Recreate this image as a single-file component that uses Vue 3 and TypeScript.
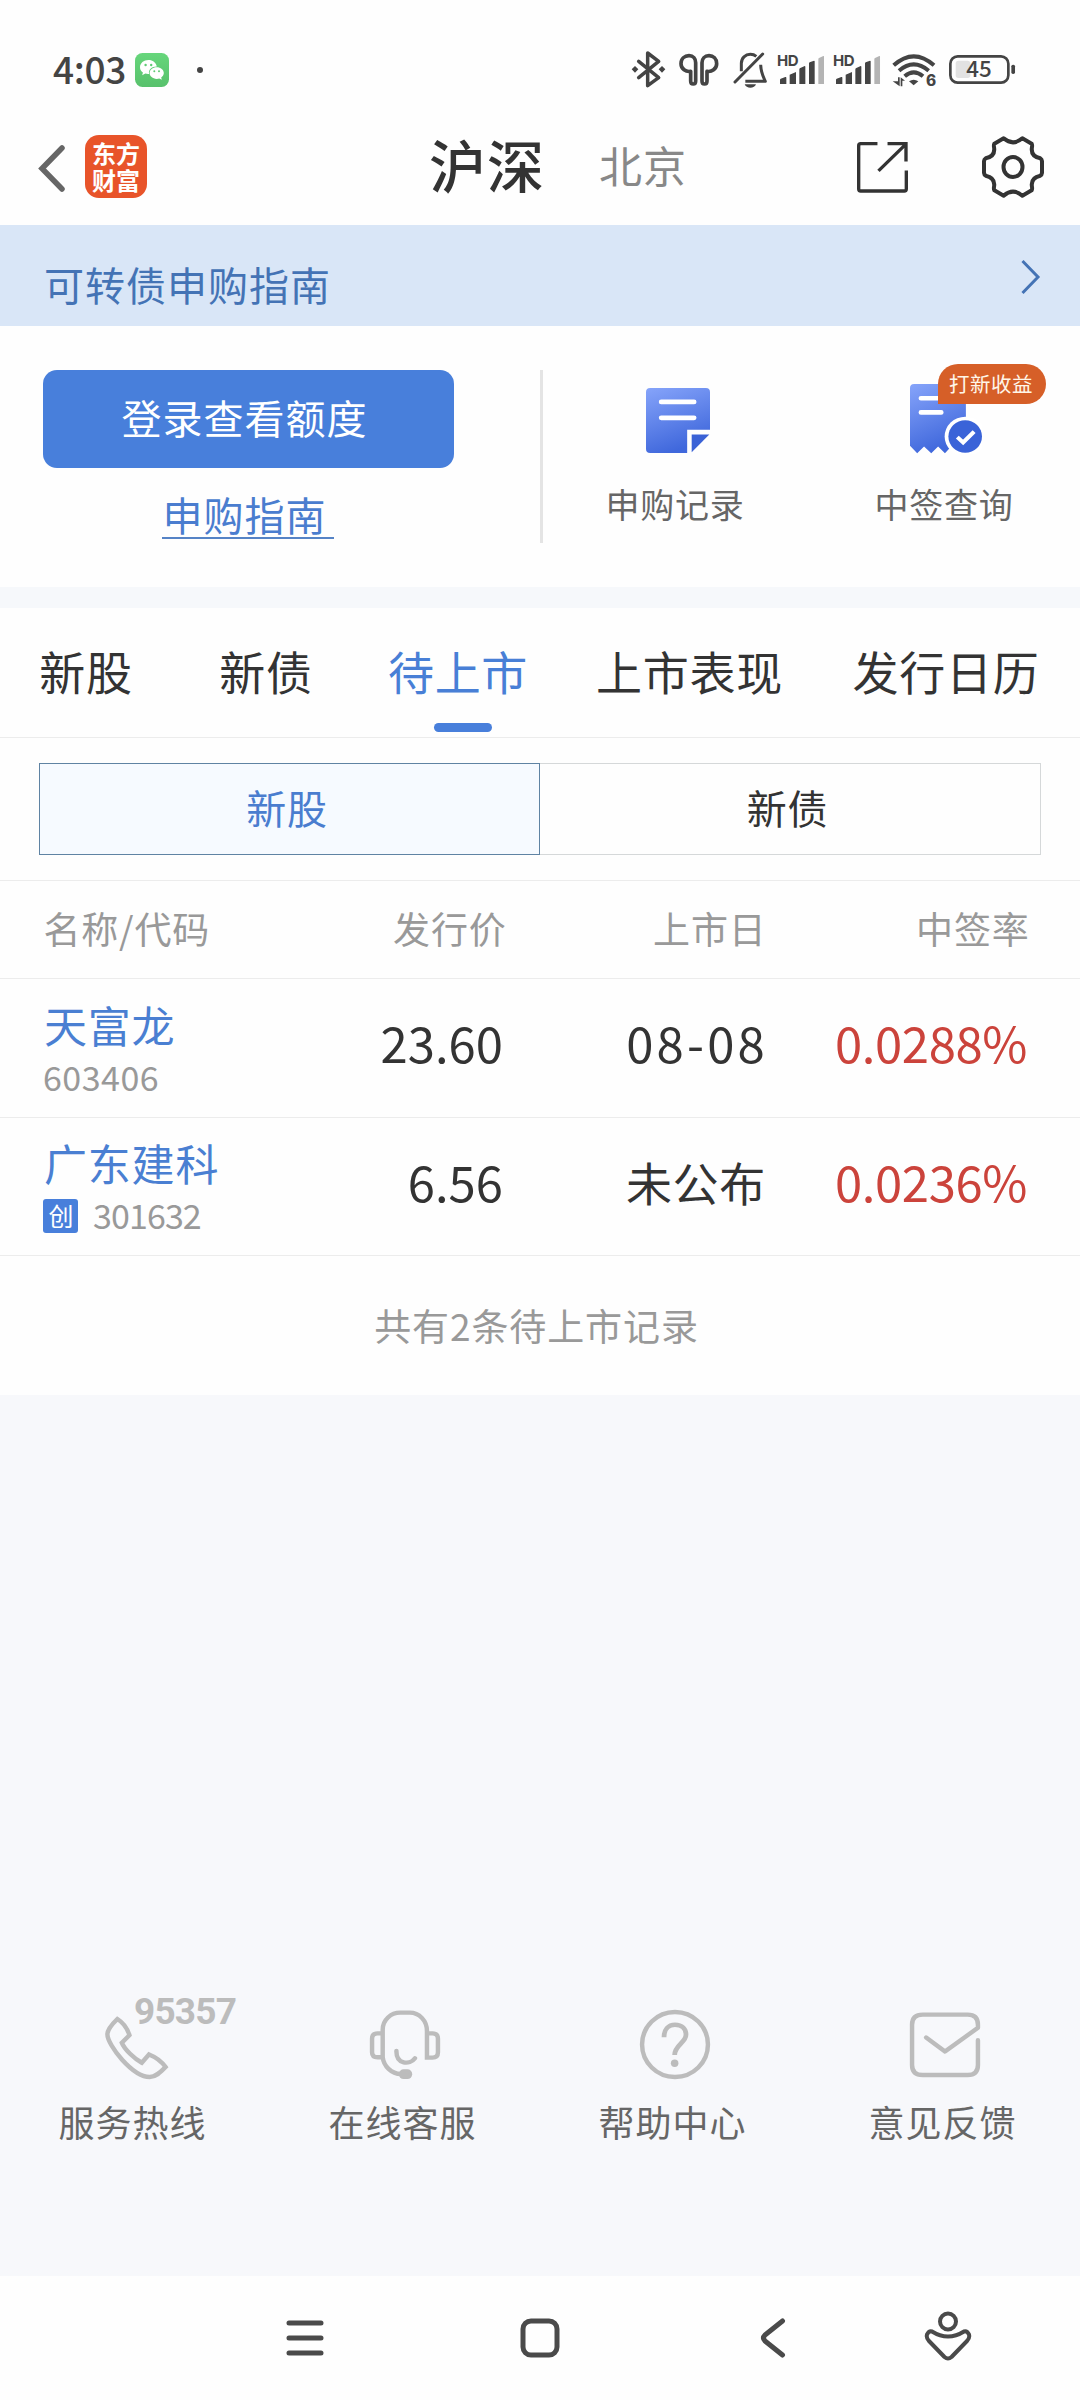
<script setup lang="ts">
interface Stock {
  name: string
  code: string
  board?: string
  price: string
  date: string
  rate: string
}

const tabs: string[] = ['新股', '新债', '待上市', '上市表现', '发行日历']
const activeTab = '待上市'
const columns: string[] = ['名称/代码', '发行价', '上市日', '中签率']
const stocks: Stock[] = [
  { name: '天富龙', code: '603406', price: '23.60', date: '08-08', rate: '0.0288%' },
  { name: '广东建科', code: '301632', board: '创', price: '6.56', date: '未公布', rate: '0.0236%' },
]
const isNumeric = (s: string): boolean => /^\d/.test(s)
</script>

<template>
  <div class="screen">
    <div class="status">
      <span class="time">4:03</span>
      <svg class="wechat" viewBox="0 0 34 34">
        <defs>
          <linearGradient id="wx" x1="0" y1="0" x2="0" y2="1">
            <stop offset="0" stop-color="#66d67b" />
            <stop offset="1" stop-color="#58c16c" />
          </linearGradient>
        </defs>
        <rect width="34" height="34" rx="7.5" fill="url(#wx)" />
        <path d="M13.5 7C8.7 7 5 10.200 5 14.200c0 2.300 1.100 4.100 2.900 5.400L7.200 22.200l3.100-1.600c1.200.4 2.400.5 3.800.4-1-4.300 2.600-7.700 7.700-7.600C21 9.600 17.700 7 13.500 7z" fill="#fff" />
        <path d="M21.700 14.300c-4 0-7.100 2.600-7.100 5.800s3.100 5.800 7.100 5.800c.9 0 1.800-.1 2.600-.4l2.500 1.300-.6-2.200c1.600-1.100 2.600-2.700 2.600-4.500 0-3.200-3.200-5.800-7.100-5.800z" fill="#fff" />
        <g fill="#5fcb74">
          <circle cx="10.600" cy="12" r="1.200" /><circle cx="16.200" cy="12" r="1.200" />
          <circle cx="19.300" cy="18.300" r="1" /><circle cx="24" cy="18.300" r="1" />
        </g>
      </svg>
      <i class="dot"></i>
      <svg class="st-icons" viewBox="90 60 1160 116">
        <g fill="none" stroke="#444" stroke-width="11" stroke-linecap="round" stroke-linejoin="round">
          <path d="M116 94L176 143L143 167V69L176 94L116 143" stroke-width="10.500" />
          <path d="M272 153V124C258 127 243 116 243 101C243 86 254 77 267 77C280 77 287 86 287 98V153C287 165 272 165 272 153z" />
          <path d="M321 124V153C321 165 306 165 306 153V98C306 86 314 77 327 77C340 77 350 86 350 101C350 116 335 127 321 124z" />
          <path d="M405 156L488 72" stroke-width="9" />
          <path d="M424 124V100C424 84 436 73 451 73C458 73 464 75 469 79M482 104C482 126 490 140 496 154H436" stroke-width="9" stroke-linecap="butt" />
        </g>
        <g fill="#444">
          <path d="M95 118l10-10 10 10-10 10zM176 118l10-10 10 10-10 10z" />
          <path d="M434 163h34c-4 14-30 14-34 0z" />
        </g>
        <g v-for="dx in [0, 168]" :key="dx" :transform="`translate(${dx} 0)`" fill="#444">
          <text x="531" y="108" class="hd">HD</text>
          <path d="M540 162v-13q0-2 2-3l14-5q3-1 3 2v19q0 0-2 0h-15zM569 162v-28l19-8v36zM598 162v-44q0-3 3-4l13-6q2 0 2 2v52zM627 162v-62q0-2 2-3l13-5q2 0 2 2v68z" />
          <path d="M655 162v-75q0-2 2-3l13-6q2-1 2 2v82z" fill="#b4b4b4" />
        </g>
        <g fill="none" stroke="#444" stroke-width="12">
          <path d="M881 106Q941 52 1002 106" />
          <path d="M897 122Q941 84 986 122" />
          <path d="M914 139Q941 115 969 139" />
        </g>
        <g fill="#444">
          <path d="M927 154q14-10 28 0l-14 12z" />
          <path d="M894 142h5v27l-21-15h16zM902 169v-27l13 10h-8v17z" />
          <text x="978" y="168" class="six">6</text>
          <rect x="1234" y="104" width="11" height="28" rx="5" />
        </g>
        <rect x="1067" y="92" width="44" height="52" rx="8" fill="#e2e2e2" />
        <rect x="1051" y="79" width="174" height="79" rx="22" fill="none" stroke="#444" stroke-width="8" />
        <text x="1137" y="142" class="batt">45</text>
      </svg>
    </div>

    <header class="header">
      <svg class="back" viewBox="0 0 32 52"><path d="M27 6L7 26.500L27 47" fill="none" stroke="#666" stroke-width="5.500" stroke-linecap="round" /></svg>
      <div class="logo">东方财富</div>
      <h1 class="market on">沪深</h1>
      <span class="market">北京</span>
      <svg class="share" viewBox="772 337 152 152">
        <path d="M833 342H783q-6 0-6 6V477q0 6 6 6H913q6 0 6-6V422M863 342H918V395M836 423L917 344" fill="none" stroke="#333" stroke-width="10" />
      </svg>
      <svg class="gear" viewBox="-93 -93 186 186">
        <g fill="none" stroke="#333" stroke-width="12" stroke-linejoin="round">
          <path d="M28-86L56-70Q58-66 57-60Q52-32 82-26Q88-22 87-12V12Q88 22 82 26Q52 32 57 60Q58 66 56 70L28 86Q0 62-28 86L-56 70Q-58 66-57 60Q-52 32-82 26Q-88 22-87 12V-12Q-88-22-82-26Q-52-32-57-60Q-58-66-56-70L-28-86Q0-62 28-86z" />
          <ellipse rx="28.500" ry="30" />
        </g>
      </svg>
    </header>

    <div class="banner">
      <span>可转债申购指南</span>
      <svg viewBox="0 0 20 36"><path d="M1.500 2L17 18L1.500 34" fill="none" stroke="#4473b5" stroke-width="3" /></svg>
    </div>

    <section class="panel">
      <div class="account">
        <button class="login">登录查看额度</button>
        <a class="guide">申购指南</a>
      </div>
      <i class="rule"></i>
      <div class="entry">
        <svg class="doc" viewBox="305 534 185 192" preserveAspectRatio="none">
          <defs>
            <linearGradient id="ga" x1="0" y1="0" x2=".35" y2="1">
              <stop offset="0" stop-color="#86a4fa" />
              <stop offset="1" stop-color="#4068dc" />
            </linearGradient>
          </defs>
          <path d="M317 534H478q12 0 12 12V657H424V726H317q-12 0-12-12V546q0-12 12-12z" fill="url(#ga)" />
          <path d="M437 671H488L437 724z" fill="#3a62d6" />
          <path d="M349 575H444M349 622H444" stroke="#fff" stroke-width="14" stroke-linecap="round" />
        </svg>
        <span>申购记录</span>
      </div>
      <div class="entry second">
        <svg class="receipt" viewBox="1074 521 210 212" preserveAspectRatio="none">
          <path d="M1086 521H1225q12 0 12 12V640L1190 715L1176 731L1156 710L1136 731L1115 710L1095 731L1074 708V533q0-12 12-12z" fill="url(#ga)" />
          <circle cx="1235" cy="680" r="60" fill="#fff" />
          <circle cx="1235" cy="680" r="49" fill="#3a63d8" />
          <path d="M1106 564H1170M1106 607H1165" stroke="#fff" stroke-width="14" stroke-linecap="round" />
          <path d="M1212 682L1229 698L1261 665" fill="none" stroke="#fff" stroke-width="12" />
        </svg>
        <span>中签查询</span>
        <em class="tag">打新收益</em>
      </div>
    </section>

    <nav class="tabs">
      <span v-for="t in tabs" :key="t" class="tab" :class="{ active: t === activeTab }">{{ t }}</span>
    </nav>

    <div class="segments">
      <span class="seg on">新股</span>
      <span class="seg">新债</span>
    </div>

    <div class="row thead">
      <span v-for="c in columns" :key="c">{{ c }}</span>
    </div>
    <div v-for="s in stocks" :key="s.code" class="row stock">
      <div class="who">
        <span class="name">{{ s.name }}</span>
        <span class="code" :class="{ tight: s.board }"><b v-if="s.board">{{ s.board }}</b>{{ s.code }}</span>
      </div>
      <span class="val">{{ s.price }}</span>
      <span class="val" :class="isNumeric(s.date) ? 'date' : 'word'">{{ s.date }}</span>
      <span class="val rate">{{ s.rate }}</span>
    </div>
    <div class="summary">共有2条待上市记录</div>

    <footer class="service">
      <div class="help">
        <svg class="phone" viewBox="305 140 183 187" preserveAspectRatio="none">
          <path d="M341 146C325 162 312 178 312 192C312 225 385 321 435 321C452 321 465 308 481 291C470 275 450 260 433 253L412 278C390 266 362 238 354 218L376 195C370 175 355 155 341 146z" />
        </svg>
        <em class="hotline">95357</em>
        <span>服务热线</span>
      </div>
      <div class="help">
        <svg viewBox="1074 121 204 206" preserveAspectRatio="none">
          <path d="M1111 262V180C1111 150 1135 129 1162 129H1190C1217 129 1240 152 1240 184V263H1256Q1272 263 1272 247V207Q1272 191 1256 191H1240M1111 191H1096Q1080 191 1080 207V247Q1080 262 1096 262H1111C1114 288 1136 312 1164 312M1151 243C1150 284 1190 286 1205 265" stroke-linecap="round" />
          <rect x="1158" y="298" width="39" height="29" rx="14" class="solid" />
        </svg>
        <span>在线客服</span>
      </div>
      <div class="help">
        <svg viewBox="290 121 204 206" preserveAspectRatio="none">
          <ellipse cx="392" cy="224" rx="96" ry="97" />
          <path d="M360 202C360 180 372 165 392 165C413 165 424 178 424 195C424 218 391 226 391 255" stroke-width="14" />
          <circle cx="391" cy="280" r="11" class="solid" />
        </svg>
        <span>帮助中心</span>
      </div>
      <div class="help">
        <svg viewBox="1074 121 204 206" preserveAspectRatio="none">
          <path d="M1272 211V285Q1272 315 1242 315H1111Q1080 315 1080 285V165Q1080 135 1111 135H1242Q1272 135 1272 165V174L1176 245L1121 203" stroke-linecap="round" stroke-linejoin="round" />
        </svg>
        <span>意见反馈</span>
      </div>
    </footer>

    <div class="navbar">
      <svg class="n-menu" viewBox="0 0 38 36"><path d="M3 3H35M3 18H35M3 33H35" /></svg>
      <svg class="n-home" viewBox="0 0 40 40"><rect x="3" y="3" width="34" height="34" rx="8" /></svg>
      <svg class="n-back" viewBox="0 0 26 40"><path d="M22.500 3L5 17Q2 20 5 23L22.500 37" /></svg>
      <svg class="n-person" viewBox="0 0 48 50">
        <circle cx="24" cy="10.500" r="8" />
        <path d="M8 20.500Q24 30.500 40 20.500Q43 19.500 45 23.500Q46 27 43 30L27.500 46Q24 49 20.500 46L5 30Q2 27 3 23.500Q5 19.500 8 20.500z" />
      </svg>
    </div>
  </div>
</template>

<style>
body {
  background: #fefefe;
}
</style>

<style scoped>
.screen {
  width: 1080px;
  height: 2400px;
  display: flex;
  flex-direction: column;
  overflow: hidden;
  background: #fefefe;
  color: #333;
  font-family: 'Noto Sans CJK SC', sans-serif;
}
svg {
  display: block;
  flex: none;
}
.status {
  height: 100px;
  padding: 41px 0 0 53px;
  display: flex;
  align-items: flex-start;
  flex: none;
  box-sizing: border-box;
}
.time {
  width: 75px;
  margin-right: 7px;
  font-size: 37px;
  line-height: 54px;
  font-weight: 500;
  color: #444;
  letter-spacing: -0.3px;
}
.wechat {
  width: 34px;
  height: 34px;
  margin-top: 12px;
}
.dot {
  width: 6px;
  height: 6px;
  margin: 26px 0 0 28px;
  border-radius: 50%;
  background: #444;
}
.st-icons {
  width: 386.7px;
  height: 38.7px;
  margin: 9px 0 0 427px;
}
.hd {
  font: 700 45px Inter, sans-serif;
  letter-spacing: -1px;
}
.six {
  font: 800 46px Inter, sans-serif;
}
.batt {
  font: 500 67px 'Noto Sans CJK SC', sans-serif;
  fill: #444;
  text-anchor: middle;
}
.header {
  height: 125px;
  padding-left: 35px;
  display: flex;
  align-items: flex-start;
  flex: none;
  box-sizing: border-box;
}
.back {
  width: 32px;
  height: 52px;
  margin-top: 42px;
}
.logo {
  width: 62px;
  height: 63px;
  margin: 35px 0 0 18px;
  padding: 4px 6px 0 7px;
  box-sizing: border-box;
  border-radius: 14px;
  background: #e8542a;
  color: #fff;
  font-size: 24px;
  line-height: 27px;
  font-weight: 700;
  word-break: break-all;
}
.market {
  width: 88px;
  margin: 32px 0 0 54px;
  font-size: 43px;
  line-height: 64px;
  letter-spacing: 1px;
  color: #888;
}
.market.on {
  width: 116px;
  margin: 23px 0 0 282px;
  font-size: 57px;
  line-height: 80px;
  font-weight: 500;
  color: #333;
}
.share {
  width: 51px;
  height: 51px;
  margin: 42px 0 0 170px;
}
.gear {
  width: 62px;
  height: 62px;
  margin: 36px 0 0 74px;
}
.banner {
  height: 101px;
  padding: 29px 39px 0 44px;
  display: flex;
  justify-content: space-between;
  flex: none;
  box-sizing: border-box;
  background: #d9e6f7;
  color: #4473b5;
  font-size: 40px;
  line-height: 60px;
  letter-spacing: 1px;
}
.banner svg {
  width: 20px;
  height: 36px;
  margin-top: 5px;
}
.panel {
  height: 261px;
  padding: 44px 0 0 43px;
  display: flex;
  flex: none;
  box-sizing: border-box;
}
.account {
  width: 411px;
  display: flex;
  flex-direction: column;
  align-items: center;
}
.login {
  width: 411px;
  height: 98px;
  padding: 0 8px 4px 0;
  border: 0;
  border-radius: 14px;
  background: #487fdb;
  color: #fff;
  font-family: inherit;
  font-size: 40px;
  line-height: 60px;
  letter-spacing: 1px;
}
.guide {
  width: 171px;
  height: 50px;
  margin: 19px 2px 0 0;
  padding-left: 1px;
  line-height: 55px;
  font-size: 40px;
  letter-spacing: 1px;
  color: #4a7dcf;
  border-bottom: 2px solid #5583c6;
}
.rule {
  width: 3px;
  height: 173px;
  margin-left: 86px;
  background: #e4e4e4;
}
.entry {
  width: 270px;
  margin-left: -2px;
  display: flex;
  flex-direction: column;
  align-items: center;
  position: relative;
  font-size: 34px;
  line-height: 50px;
  letter-spacing: 0.7px;
  color: #666;
}
.entry span {
  margin: 27px 0 0 -2px;
}
.doc {
  width: 64px;
  height: 65px;
  margin: 18px 0 -1px 3px;
}
.entry.second {
  margin-left: -1px;
}
.receipt {
  width: 72px;
  height: 70px;
  margin: 14px 0 -2px 1px;
}
.tag {
  position: absolute;
  left: 128px;
  top: -6px;
  width: 108px;
  height: 40px;
  padding-right: 2px;
  box-sizing: border-box;
  border-radius: 20px 20px 20px 0;
  background: #d65f28;
  color: #fff6e8;
  font-style: normal;
  font-size: 20.500px;
  line-height: 38px;
  letter-spacing: 0.5px;
  text-align: center;
}
.tabs {
  height: 151px;
  border-top: 21px solid #f6f8fb;
  border-bottom: 1px solid #ececec;
  box-sizing: border-box;
  display: grid;
  grid-template-columns: 172px 188px 196px 267px 246px;
  flex: none;
}
.tab {
  display: flex;
  flex-direction: column;
  align-items: center;
  padding-top: 26.500px;
  font-size: 46px;
  line-height: 70px;
  letter-spacing: 0.7px;
}
.tab.active {
  color: #487fd6;
}
.tab.active::after {
  content: '';
  width: 58px;
  height: 9px;
  margin: 18px 0 0 10px;
  border-radius: 5px;
  background: #487fdb;
}
.segments {
  height: 143px;
  padding: 25px 39px 0;
  display: flex;
  border-bottom: 1px solid #ececec;
  box-sizing: border-box;
  flex: none;
}
.seg {
  width: 501px;
  height: 92px;
  box-sizing: border-box;
  padding-right: 5px;
  border: 1px solid #d5d8d9;
  border-left: 0;
  font-size: 40px;
  line-height: 86px;
  letter-spacing: 0.7px;
  text-align: center;
}
.seg.on {
  border: 1px solid #5f83a3;
  background: #f6faff;
  color: #4a7dcf;
}
.row {
  display: grid;
  grid-template-columns: 266px 196px 260px 263px;
  padding-left: 43px;
  border-bottom: 1px solid #ececec;
  box-sizing: border-box;
  flex: none;
  text-align: right;
}
.thead {
  height: 98px;
  padding-top: 18px;
  padding-left: 44.500px;
  font-size: 37px;
  line-height: 58px;
  letter-spacing: 0.8px;
  color: #999;
}
.thead span:first-child {
  margin-left: -1px;
  text-align: left;
}
.stock {
  height: 138.500px;
}
.who {
  text-align: left;
}
.name {
  display: block;
  margin: 14.500px 0 0 1px;
  font-size: 43px;
  line-height: 60px;
  letter-spacing: 0.8px;
  color: #4a7fd2;
}
.code {
  display: flex;
  align-items: center;
  height: 40px;
  margin-top: 3px;
  font-size: 34px;
  line-height: 40px;
  letter-spacing: 0.5px;
  color: #999;
}
.code.tight {
  letter-spacing: -0.9px;
}
.code b {
  width: 35px;
  height: 34px;
  margin: 1px 15px 0 0;
  border-radius: 3px;
  background: #487fdb;
  color: #fff;
  font-size: 25px;
  line-height: 33px;
  font-weight: 400;
  text-align: center;
}
.val {
  margin-top: 31px;
  padding-right: 2px;
  font-size: 49px;
  line-height: 64px;
}
.date {
  letter-spacing: 3.200px;
  margin-right: -3px;
  padding-right: 0;
}
.word {
  margin-right: -1px;
  font-size: 46px;
  letter-spacing: 0.7px;
  padding-right: 0;
}
.rate {
  padding-right: 1px;
  letter-spacing: -0.4px;
  color: #cb433b;
}
.summary {
  height: 139px;
  padding: 39px 7px 0 0;
  box-sizing: border-box;
  flex: none;
  font-size: 37px;
  line-height: 60px;
  letter-spacing: 0.9px;
  text-align: center;
  color: #999;
}
.service {
  height: 881px;
  padding-top: 615px;
  box-sizing: border-box;
  display: flex;
  flex: none;
  background: #f7f8fb;
}
.help {
  width: 270px;
  display: flex;
  flex-direction: column;
  align-items: center;
  position: relative;
  font-size: 36px;
  line-height: 54px;
  letter-spacing: 1px;
  color: #666;
}
.help svg {
  width: 70px;
  height: 69px;
  overflow: visible;
  fill: none;
  stroke: #bcbcbc;
  stroke-width: 13px;
}
.help .phone {
  width: 63px;
  height: 62px;
  margin: 7px 0 0 3px;
}
.help .solid {
  fill: #bcbcbc;
  stroke: none;
}
.help span {
  margin: 15px 5px 0 0;
}
.hotline {
  position: absolute;
  left: 134px;
  top: -18px;
  font: 700 37px/40px Roboto, sans-serif;
  letter-spacing: -0.8px;
  color: #bcbcbc;
}
.navbar {
  flex: 1;
  display: flex;
  align-items: flex-start;
  padding-left: 286px;
}
.navbar svg {
  fill: none;
  stroke: #4a4a4a;
  stroke-width: 5px;
  stroke-linecap: round;
  stroke-linejoin: round;
}
.n-menu {
  width: 38px;
  height: 36px;
  margin-top: 44px;
}
.n-home {
  width: 40px;
  height: 40px;
  margin: 42px 0 0 196px;
}
.n-back {
  width: 26px;
  height: 40px;
  margin: 42px 0 0 200px;
}
.navbar .n-person {
  width: 48px;
  height: 50px;
  margin: 35px 0 0 138px;
  stroke-width: 4px;
}
</style>
